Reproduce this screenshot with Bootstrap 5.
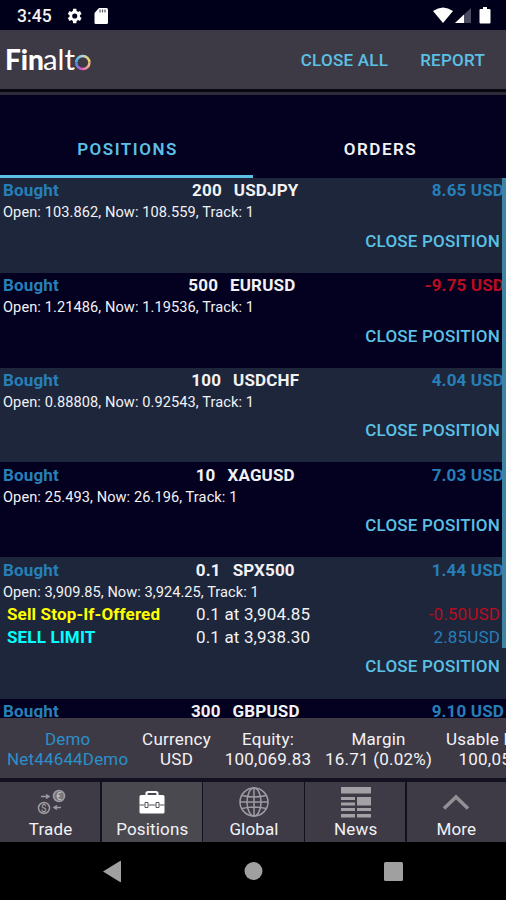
<!DOCTYPE html>
<html lang="en">
<head>
<meta charset="utf-8">
<meta name="viewport" content="width=device-width, initial-scale=1">
<title>Finalto Positions</title>
<link href="https://cdn.jsdelivr.net/npm/bootstrap@5.3.0/dist/css/bootstrap.min.css" rel="stylesheet">
<style>
body{width:506px;height:900px;overflow:hidden;background:#04001f;color:#f2f2f5;font-family:Roboto,"Liberation Sans",sans-serif;font-size:17px;line-height:20px;letter-spacing:.15px;white-space:nowrap}
svg{display:block;flex:none}
.status{height:30px;background:#00001a;padding:1px 15px 0 17px;font-weight:500}
.status .clock{font-size:17.5px;letter-spacing:.1px;padding-top:1px;width:49px}
.appbar{height:59px;background:#3e3a45;padding:1px 21px 0 5px}
.rule-a{height:3px;background:#08060f}
.rule-b{height:3px;background:#2e2a3a}
.cy{color:#5bc0e4}
.act{font-weight:500;font-size:17px;letter-spacing:.25px}
.rep{margin-left:32px}
.tabbar{height:83px}
.tab-item{width:253px;text-align:center;padding-top:44px;font-weight:600;font-size:17px;letter-spacing:1.5px;border-bottom:3px solid transparent;height:83px;padding-left:2px}
.tab-item.on{color:#5bc0e4;border-color:#5bc0e4}
.plist{height:540px;overflow:hidden;position:relative}
.pos{height:94.8px;padding:2.4px 2px 0 3px}
.pos:nth-child(odd){background:#1d263b}
.pos.tall{height:141.8px}
.pos.last-row{background:#04001f}
.head{font-weight:700;font-size:17px;height:21px}
.sym{gap:12px}
.bl{color:#277fb8}
.rd{color:#b90d20}
.info-line{font-size:14.6px;letter-spacing:.08px;height:22px;line-height:22px}
.tall .info-line{letter-spacing:.05px}
.close-line{font-weight:500;text-align:right;letter-spacing:.2px;padding:7.500px 4px 0 0}
.ord{height:23px;line-height:22px;padding:0 4px 0 4px}
.ord .nm{font-weight:700;width:189px}
.ord .v{margin-left:auto}
.c-yel{color:#ff0}
.c-aqua{color:#0ff}
.thumb{position:absolute;right:0;top:0;width:4px;height:470px;background:#3f83a3}
.acct{height:60px;background:#3e3a45;text-align:center;padding:11px 0 0 7px;overflow:hidden;gap:13.800px;letter-spacing:.22px}
.acct>div{flex:none}
.acct .bl{color:#2b8fc9;letter-spacing:.17px}
.bnav{height:64px;background:#131020;padding-top:4px}
.bnav .it{flex:1 1 0;margin-right:1.500px;background:#3e3b46;text-align:center;height:60px;padding:5px 0 0 1px}
.bnav .it:last-child{margin-right:0;padding-left:0}
.bnav .it.on{background:#4a4950}
.bnav svg{margin:0 auto;width:36px;height:32px}
.sys{height:58px;background:#000}
</style>
</head>
<body>
<div class="status d-flex align-items-center">
  <span class="clock">3:45</span>
  <svg width="16" height="16" viewBox="3 2 18 20" fill="#fff"><path fill-rule="evenodd" d="M19.400 13a7.500 7.500 0 0 0 0-2l2.100-1.600-2-3.500-2.500 1a7.500 7.500 0 0 0-1.700-1L14.900 3h-4l-.4 2.900a7.500 7.500 0 0 0-1.700 1l-2.500-1-2 3.500L6.400 11a7.500 7.500 0 0 0 0 2l-2.100 1.600 2 3.500 2.500-1c.5.400 1.100.8 1.700 1l.4 2.900h4l.4-2.900c.6-.2 1.200-.6 1.700-1l2.500 1 2-3.500zM12.900 15.200a3.200 3.200 0 1 1 0-6.400 3.200 3.200 0 0 1 0 6.400z"/></svg>
  <svg class="me-auto ms-1" width="22" height="16" viewBox="-8 0 22 16"><path d="M5 0h7.500Q14 0 14 1.500v13Q14 16 12.500 16h-11Q.500 16 .5 14.500V5z" fill="#fff"/><path d="M6 1.500v3M8.500 1.500v3M11 1.500v3" stroke="#556" stroke-width="1.200"/></svg>
  <svg width="58" height="18" viewBox="0 0 58 18"><path d="M0 4q10-7 20 0L10 16z" fill="#fff"/><path d="M38 1v15H22z" fill="#4c4a60"/><path d="M31 7.500V16h-9z" fill="#fff"/><path d="M47.500 2h2.500V0h4v2h2.500q1 0 1 1v12.500q0 1-1 1h-9q-1 0-1-1V3q0-1 1-1z" fill="#fff"/></svg>
</div>
<div class="appbar d-flex align-items-center">
  <svg width="88" height="40" viewBox="0 -3 88 40"><defs><linearGradient id="g" x1="0" y1="0" x2="1" y2="0"><stop offset="0" stop-color="#3bb3e6"/><stop offset=".45" stop-color="#b9d3dc"/><stop offset="1" stop-color="#f2cf63"/></linearGradient><linearGradient id="h"><stop offset="0" stop-color="#5a8ae0"/><stop offset=".4" stop-color="#e052c4"/><stop offset="1" stop-color="#f0c080"/></linearGradient></defs><g fill="#fff" font-size="28" letter-spacing="0"><text x="0" y="27" font-family="Lato" font-weight="900" textLength="39" lengthAdjust="spacingAndGlyphs">Fin</text><text x="38" y="27" font-family="Lato" font-weight="400" textLength="32" lengthAdjust="spacingAndGlyphs">alt</text></g><path d="M71.200 19.500a6.600 6.600 0 0 1 13.200 0" fill="none" stroke="url(#g)" stroke-width="2.500"/><path d="M71.200 19.500a6.600 6.600 0 0 0 13.200 0" fill="none" stroke="url(#h)" stroke-width="2.500"/></svg>
  <span class="act cy ms-auto">CLOSE ALL</span><span class="act cy rep">REPORT</span>
</div>
<div class="rule-a"></div><div class="rule-b"></div>
<div class="tabbar d-flex"><div class="tab-item on">POSITIONS</div><div class="tab-item">ORDERS</div></div>
<div class="plist">
  <div class="pos"><div class="head d-flex justify-content-between"><span class="bl">Bought</span><span class="d-flex sym"><span>200</span><span>USDJPY</span></span><span class="bl">8.65 USD</span></div><div class="info-line">Open: 103.862, Now: 108.559, Track: 1</div><div class="close-line cy">CLOSE POSITION</div></div>
  <div class="pos"><div class="head d-flex justify-content-between"><span class="bl">Bought</span><span class="d-flex sym"><span>500</span><span>EURUSD</span></span><span class="rd">-9.75 USD</span></div><div class="info-line">Open: 1.21486, Now: 1.19536, Track: 1</div><div class="close-line cy">CLOSE POSITION</div></div>
  <div class="pos"><div class="head d-flex justify-content-between"><span class="bl">Bought</span><span class="d-flex sym"><span>100</span><span>USDCHF</span></span><span class="bl">4.04 USD</span></div><div class="info-line">Open: 0.88808, Now: 0.92543, Track: 1</div><div class="close-line cy">CLOSE POSITION</div></div>
  <div class="pos"><div class="head d-flex justify-content-between"><span class="bl">Bought</span><span class="d-flex sym"><span>10</span><span>XAGUSD</span></span><span class="bl">7.03 USD</span></div><div class="info-line">Open: 25.493, Now: 26.196, Track: 1</div><div class="close-line cy">CLOSE POSITION</div></div>
  <div class="pos tall"><div class="head d-flex justify-content-between"><span class="bl">Bought</span><span class="d-flex sym"><span>0.1</span><span>SPX500</span></span><span class="bl">1.44 USD</span></div><div class="info-line">Open: 3,909.85, Now: 3,924.25, Track: 1</div>
    <div class="ord d-flex"><span class="nm c-yel">Sell Stop-If-Offered</span><span>0.1 at 3,904.85</span><span class="v rd">-0.50USD</span></div>
    <div class="ord d-flex"><span class="nm c-aqua">SELL LIMIT</span><span>0.1 at 3,938.30</span><span class="v bl">2.85USD</span></div>
    <div class="close-line cy">CLOSE POSITION</div></div>
  <div class="pos last-row"><div class="head d-flex justify-content-between"><span class="bl">Bought</span><span class="d-flex sym"><span>300</span><span>GBPUSD</span></span><span class="bl">9.10 USD</span></div></div>
  <div class="thumb"></div>
</div>
<div class="acct d-flex">
  <div class="bl">Demo<br>Net44644Demo</div><div>Currency<br>USD</div><div>Equity:<br>100,069.83</div><div>Margin<br>16.71 (0.02%)</div><div>Usable Margin<br>100,053.12</div>
</div>
<div class="bnav d-flex">
  <div class="it"><svg viewBox="0 0 36 32" fill="none" stroke="#9d9ba3" stroke-width="1.500"><circle cx="26" cy="9" r="5.500" fill="#77757d"/><text x="26" y="12.500" font-size="10" text-anchor="middle" fill="#ccc" stroke="none">€</text><circle cx="11" cy="21" r="5.500"/><text x="11" y="24.500" font-size="10" text-anchor="middle" fill="#aaa" stroke="none">$</text><path d="M8 9.500h8m-3-2 3 2-3 2M28 20.500h-7m3-2-3 2 3 2"/></svg>Trade</div>
  <div class="it on"><svg viewBox="0 0 36 32"><path d="M12.500 9V6.500q0-1.500 1.500-1.500h8q1.500 0 1.500 1.500V9" fill="none" stroke="#fff" stroke-width="2.200"/><rect x="5.500" y="8" width="25" height="18.500" rx="1.500" fill="#fff"/><path d="M5.500 18h5m4 0h7m4 0h5" stroke="#55535b" stroke-width="1.200"/><path d="M11 15.500h3v5h-3zM22 15.500h3v5h-3z" fill="#fff" stroke="#55535b"/></svg>Positions</div>
  <div class="it"><svg viewBox="0 0 36 32" fill="none" stroke="#9d9ba3" stroke-width="1.500"><circle cx="18" cy="15" r="14"/><ellipse cx="18" cy="15" rx="7" ry="14"/><path d="M18 1v28M4 15h28M6 8.500q12 3 24 0M6 21.500q12-3 24 0"/></svg>Global</div>
  <div class="it"><svg viewBox="0 0 36 32" fill="#a3a1a6"><path d="M3 0h30v6.500H3zM3 10h14v3H3zM19 10h14v8.500H19zM3 15.500h14v3H3zM3 21h14v3H3zM19 21h14v3H19zM3 27h14v3.500H3zM19 27h14v3.500H19z"/></svg>News</div>
  <div class="it"><svg viewBox="0 0 36 32" fill="none" stroke="#919095" stroke-width="3.500"><path d="M6 21.500 18 10l12 11.500"/></svg>More</div>
</div>
<div class="sys"><svg width="506" height="58" viewBox="0 0 506 58" fill="#a0a0a0"><path d="M121 19.500v20q0 1-1 .6L103 29.500l17-10.600q1-.4 1 .6z"/><circle cx="253.500" cy="29" r="9"/><rect x="384" y="20" width="19" height="19" rx="1.500"/></svg></div>
<script src="https://cdn.jsdelivr.net/npm/bootstrap@5.3.0/dist/js/bootstrap.bundle.min.js"></script>
</body>
</html>
